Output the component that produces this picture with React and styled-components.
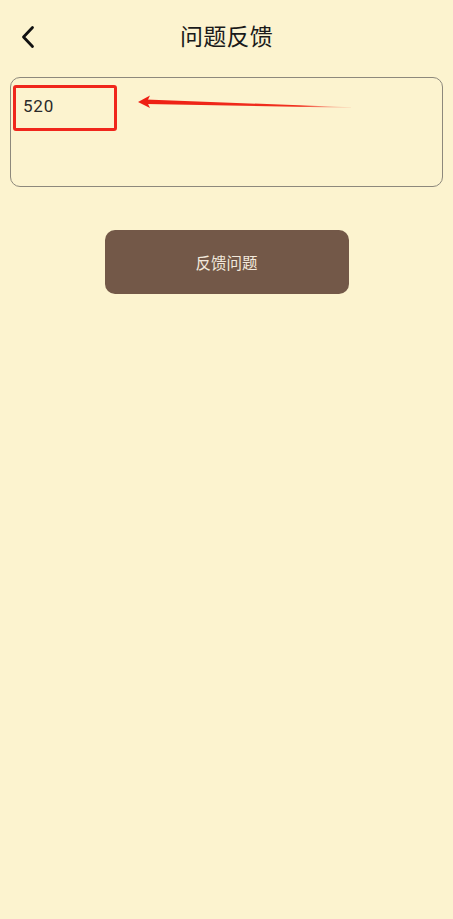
import React from "react";
import styled, { createGlobalStyle } from "styled-components";

const GlobalStyle = createGlobalStyle`
  html, body {
    margin: 0;
    padding: 0;
    background: #fcf3cf;
  }
  body {
    font-family: "Noto Sans", "Noto Sans CJK SC", sans-serif;
  }
`;

const Page = styled.div`
  width: 453px;
  min-height: 919px;
  background: #fcf3cf;
  padding: 0 10px;
  box-sizing: border-box;
  display: flex;
  flex-direction: column;
`;

const Header = styled.div`
  height: 74px;
  display: flex;
  align-items: center;
  justify-content: center;
  position: relative;
`;

const BackButton = styled.div`
  position: absolute;
  left: 11px;
  top: 25px;
  width: 14px;
  height: 24px;
  display: flex;
  align-items: center;
  justify-content: center;
`;

const Title = styled.div`
  font-family: "Noto Sans CJK SC", sans-serif;
  font-size: 23px;
  color: #1a1a1a;
  letter-spacing: 0.3px;
  margin-top: -4px;
`;

const InputBox = styled.div`
  position: relative;
  margin-top: 3px;
  height: 110px;
  border: 1px solid #8d887c;
  border-radius: 10px;
  box-sizing: border-box;
  padding: 18px 12px;
`;

const InputText = styled.div`
  font-family: "Roboto", "Noto Sans", sans-serif;
  font-size: 17px;
  line-height: 20px;
  letter-spacing: 0.8px;
  color: #2a2a2a;
`;

const Highlight = styled.div`
  position: absolute;
  left: 2px;
  top: 7px;
  width: 104px;
  height: 46px;
  border: 3px solid #f0261c;
  border-radius: 3px;
  box-sizing: border-box;
`;

const Arrow = styled.svg`
  position: absolute;
  left: 126px;
  top: 16px;
`;

const SubmitButton = styled.div`
  align-self: center;
  margin-top: 43px;
  width: 244px;
  height: 64px;
  border-radius: 10px;
  background: #735848;
  color: #f2e9dc;
  font-family: "Noto Sans CJK SC", sans-serif;
  font-size: 15.5px;
  display: flex;
  align-items: center;
  justify-content: center;
`;

const App = () => {
  return (
    <>
      <GlobalStyle />
      <Page>
        <Header>
          <BackButton>
            <svg width="14" height="24" viewBox="0 0 14 24">
              <path d="M11.5 2.5 L2.5 12 L11.5 21.5" fill="none" stroke="#111" strokeWidth="2.8" strokeLinecap="round" strokeLinejoin="round" />
            </svg>
          </BackButton>
          <Title>问题反馈</Title>
        </Header>
        <InputBox>
          <InputText>520</InputText>
          <Highlight />
          {/* 标注箭头 */}
          <Arrow width="220" height="18" viewBox="0 0 220 18">
            <defs>
              <linearGradient id="tail" x1="0" y1="0" x2="1" y2="0">
                <stop offset="0" stopColor="#ee1f14" />
                <stop offset="0.75" stopColor="#f0301f" />
                <stop offset="1" stopColor="#f5826a" stopOpacity="0.2" />
              </linearGradient>
            </defs>
            <path d="M9 5.5 L214 13.2 L214 13.8 L9 10 Z" fill="url(#tail)" />
            <path d="M1 8 L13 1.5 L10 7.8 L13 14 Z" fill="#ee1f14" />
          </Arrow>
        </InputBox>
        <SubmitButton>反馈问题</SubmitButton>
      </Page>
    </>
  );
};

export default App;
